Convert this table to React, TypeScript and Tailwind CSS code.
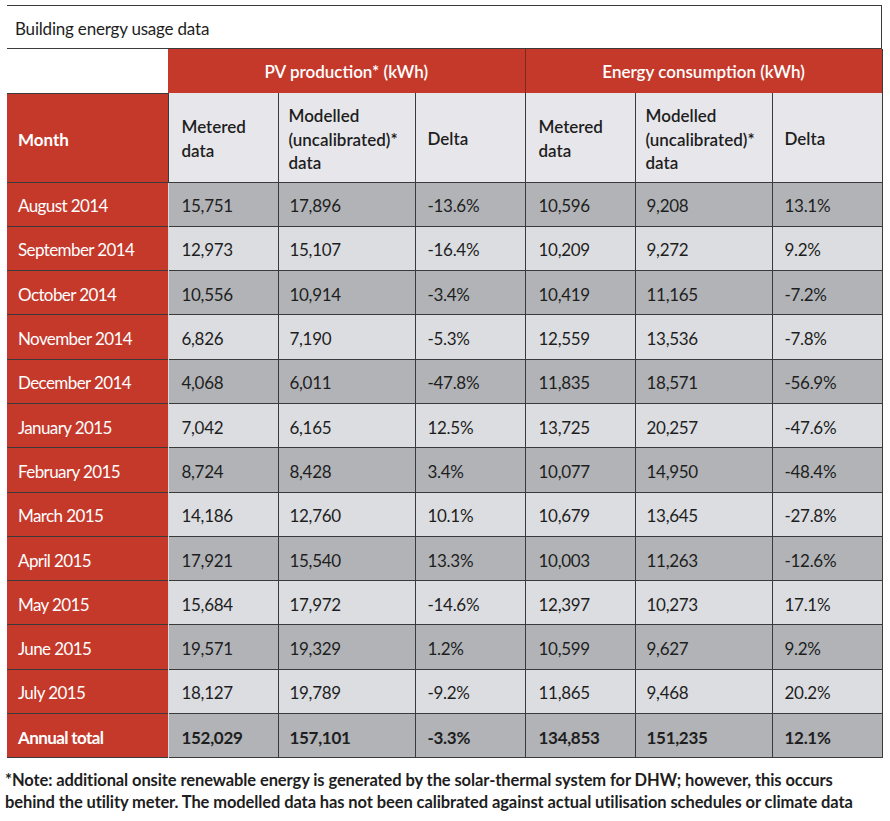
import React from "react";

type Row = {
  month: string;
  pv: [string, string, string];
  energy: [string, string, string];
};

const rows: Row[] = [
  { month: "August 2014", pv: ["15,751", "17,896", "-13.6%"], energy: ["10,596", "9,208", "13.1%"] },
  { month: "September 2014", pv: ["12,973", "15,107", "-16.4%"], energy: ["10,209", "9,272", "9.2%"] },
  { month: "October 2014", pv: ["10,556", "10,914", "-3.4%"], energy: ["10,419", "11,165", "-7.2%"] },
  { month: "November 2014", pv: ["6,826", "7,190", "-5.3%"], energy: ["12,559", "13,536", "-7.8%"] },
  { month: "December 2014", pv: ["4,068", "6,011", "-47.8%"], energy: ["11,835", "18,571", "-56.9%"] },
  { month: "January 2015", pv: ["7,042", "6,165", "12.5%"], energy: ["13,725", "20,257", "-47.6%"] },
  { month: "February 2015", pv: ["8,724", "8,428", "3.4%"], energy: ["10,077", "14,950", "-48.4%"] },
  { month: "March 2015", pv: ["14,186", "12,760", "10.1%"], energy: ["10,679", "13,645", "-27.8%"] },
  { month: "April 2015", pv: ["17,921", "15,540", "13.3%"], energy: ["10,003", "11,263", "-12.6%"] },
  { month: "May 2015", pv: ["15,684", "17,972", "-14.6%"], energy: ["12,397", "10,273", "17.1%"] },
  { month: "June 2015", pv: ["19,571", "19,329", "1.2%"], energy: ["10,599", "9,627", "9.2%"] },
  { month: "July 2015", pv: ["18,127", "19,789", "-9.2%"], energy: ["11,865", "9,468", "20.2%"] },
];

const total: Row = {
  month: "Annual total",
  pv: ["152,029", "157,101", "-3.3%"],
  energy: ["134,853", "151,235", "12.1%"],
};

function SubHeaders() {
  return (
    <>
      <th className="border-l border-[#3a3a3a] px-[13px] pt-[4px] text-left align-middle font-semibold">
        Metered
        <br />
        data
      </th>
      <th className="border-l border-[#3a3a3a] px-[10px] pt-[4px] text-left align-middle font-semibold leading-[23.5px]">
        Modelled
        <br />
        (uncalibrated)*
        <br />
        data
      </th>
      <th className="border-l border-[#3a3a3a] px-[12px] pt-[4px] text-left align-middle font-semibold">Delta</th>
    </>
  );
}

function DataRow({ row, dark, bold }: { row: Row; dark: boolean; bold?: boolean }) {
  const bg = dark ? "bg-[#b1b3b6]" : "bg-[#dcdde1]";
  const cells = [...row.pv, ...row.energy];
  return (
    <tr className="h-[44.3px] border-t border-[#3a3a3a]">
      <td
        className={`bg-[#c5392b] pt-[4px] pl-[11px] tracking-[-0.6px] text-white ${bold ? "font-bold" : ""}`}
      >
        {row.month}
      </td>
      {cells.map((c, i) => (
        <td
          key={i}
          className={`${bg} ${i === 0 ? "border-l border-[#d8d8dc]" : "border-l border-[#3a3a3a]"} ${
            i === 0 || i === 3 ? "pl-[13px]" : i === 1 || i === 4 ? "pl-[11px]" : "pl-[12px]"
          } pt-[4px] tracking-[-0.3px] text-[#1e1e1e] ${bold ? "font-bold" : ""}`}
        >
          {c}
        </td>
      ))}
    </tr>
  );
}

export default function App() {
  return (
    <div className="h-[821px] w-[890px] bg-white pt-[5px] font-['Lato',sans-serif] text-[17px] text-[#1e1e1e]">
      <div className="ml-[7px] w-[875px]">
        <div className="flex h-[44px] items-center border-t border-r border-b border-[#3a3a3a] pt-[4px] pl-[8px] text-[17px] tracking-[-0.2px]">
          Building energy usage data
        </div>
        <table className="w-[875px] table-fixed border-collapse border-r border-b border-[#3a3a3a] leading-[24px]">
          <colgroup>
            <col className="w-[161px]" />
            <col className="w-[110px]" />
            <col className="w-[137px]" />
            <col className="w-[110px]" />
            <col className="w-[110px]" />
            <col className="w-[137px]" />
            <col className="w-[110px]" />
          </colgroup>
          <thead>
            <tr className="h-[44px]">
              <th className="bg-white" />
              <th colSpan={3} className="bg-[#c5392b] pt-[2px] text-center font-semibold text-white">
                PV production* (kWh)
              </th>
              <th
                colSpan={3}
                className="border-l border-[#7a2a22] bg-[#c5392b] pt-[2px] text-center font-semibold text-white"
              >
                Energy consumption (kWh)
              </th>
            </tr>
            <tr className="h-[89px] bg-[#e7e7eb]">
              <th className="border-t border-[#3a3a3a] bg-[#c5392b] pt-[4px] pl-[11px] text-left font-bold text-white">
                Month
              </th>
              <SubHeaders />
              <SubHeaders />
            </tr>
          </thead>
          <tbody>
            {rows.map((r, i) => (
              <DataRow key={r.month} row={r} dark={i % 2 === 0} />
            ))}
            <DataRow row={total} dark bold />
          </tbody>
        </table>
      </div>
      <div className="mt-[11px] pl-[5px] text-[16.5px] leading-[22px] font-bold tracking-[-0.1px] text-[#1e1e1e]">
        *Note: additional onsite renewable energy is generated by the solar-thermal system for DHW; however, this occurs
        <br />
        behind the utility meter. The modelled data has not been calibrated against actual utilisation schedules or climate data
      </div>
    </div>
  );
}
